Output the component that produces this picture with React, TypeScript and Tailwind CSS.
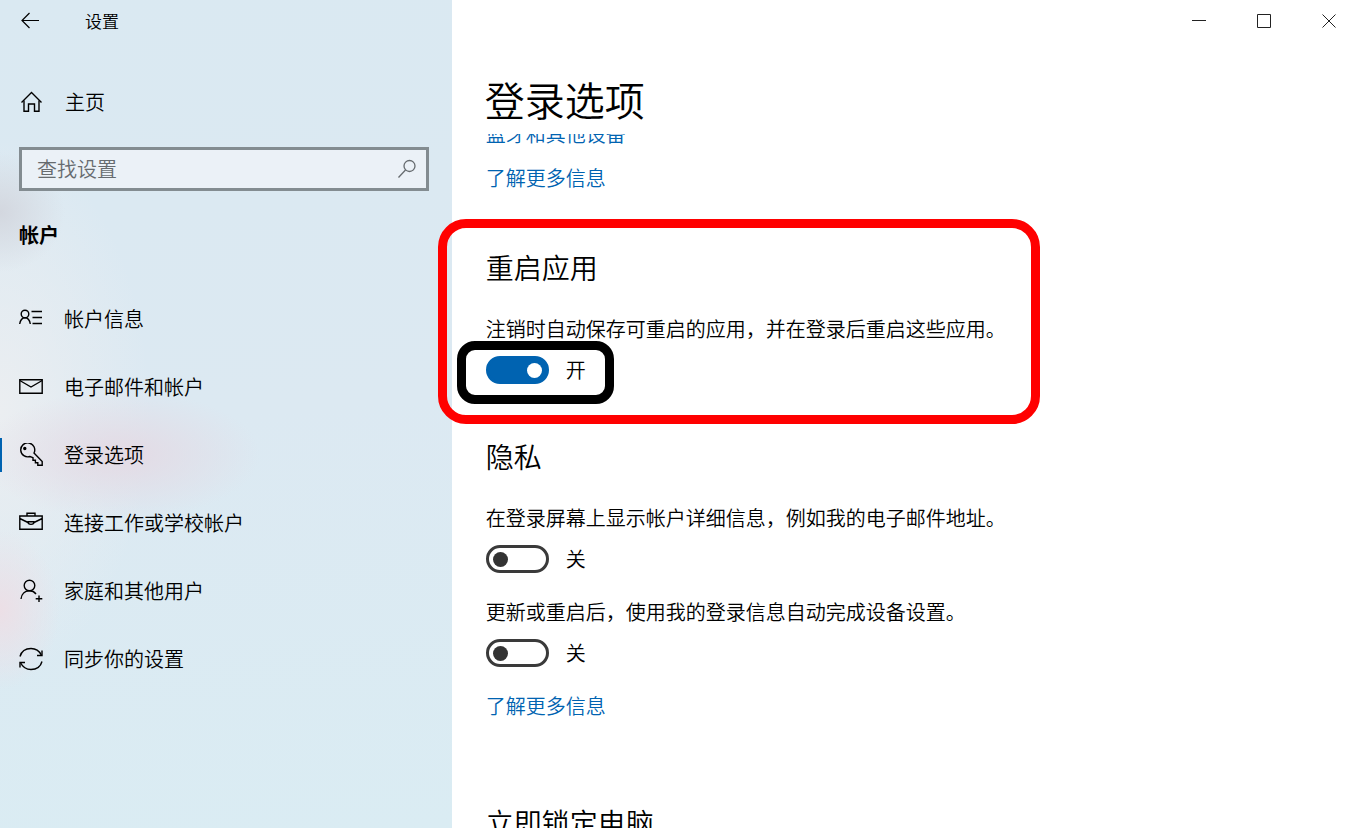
import { useState } from "react";
import type { ReactNode } from "react";

const iconProps = {
    fill: "none",
    stroke: "currentColor",
    strokeWidth: 1.4,
    "aria-hidden": true,
};

const navItems: { label: string; icon: ReactNode; active?: boolean }[] = [
    {
        label: "帐户信息",
        icon: (
            <>
                <circle cx="6" cy="7" r="3.800" />
                <path d="M.7 17c.6-3.600 2.500-6.200 5.300-6.200s4.700 2.600 5.300 6.200M12.500 4.500H23M13.500 10.500H23M13.500 16.500H23" />
            </>
        ),
    },
    {
        label: "电子邮件和帐户",
        icon: (
            <>
                <path d="M.8 4.800h22.400v13.400H.8z" />
                <path d="M.8 5.500 12 12l11.200-6.500" />
            </>
        ),
    },
    {
        label: "登录选项",
        active: true,
        icon: (
            <>
                <path d="M15 10l8.200 8.500v3.700h-4.400v-2.500h-2.400v-2.400h-2.400v-2.600l-3-1.200A7 7 0 1 1 15 10z" />
                <circle cx="5.800" cy="5.500" r="1" fill="currentColor" />
            </>
        ),
    },
    {
        label: "连接工作或学校帐户",
        icon: (
            <>
                <path d="M.8 5h22.400v13.200H.8zM8 5V2.200h8V5M.8 7.500 9 11.500M23.200 7.500 15 11.500" />
                <path d="M9 10.800h6c0 3.400-6 3.400-6 0z" />
            </>
        ),
    },
    {
        label: "家庭和其他用户",
        icon: (
            <>
                <circle cx="10.500" cy="6.500" r="5.300" />
                <path d="M2 20c.5-5 3.900-8.200 8.500-8.200 2.800 0 5 1.200 6.500 3.200M20 16.500v6.500M16.700 19.700h6.600" />
            </>
        ),
    },
    {
        label: "同步你的设置",
        icon: (
            <>
                <path d="M1 9.500C2.400 4.500 6.800 1.500 12 1.500c4.500 0 8.300 2.400 10.300 6.500M23 14.500c-1.400 5-5.800 8-11 8-4.500 0-8.300-2.400-10.300-6.500" />
                <path d="M23 3.500V8.500h-5M1 20.500v-5h5" />
            </>
        ),
    },
];

interface ToggleProps {
    id: string;
    describedBy: string;
    defaultOn?: boolean;
}

function Toggle({ id, describedBy, defaultOn = false }: ToggleProps) {
    const [on, setOn] = useState(defaultOn);

    return (
        <div className="mt-[13px] flex h-7 items-center gap-[17px]">
            <input
                id={id}
                type="checkbox"
                role="switch"
                aria-describedby={describedBy}
                checked={on}
                onChange={(e) => setOn(e.target.checked)}
                className="flex h-7 w-[63px] shrink-0 appearance-none items-center rounded-full border-[3px] border-[#3a3a3a] px-1 before:block before:size-[15px] before:rounded-full before:bg-[#333333] checked:justify-end checked:border-[#0063b1] checked:bg-[#0063b1] checked:before:bg-white"
            />
            <label htmlFor={id} className="leading-7">
                {on ? "开" : "关"}
            </label>
        </div>
    );
}

function Sidebar() {
    return (
        <aside className="w-1/3 shrink-0 bg-[#dbe9f2] bg-[radial-gradient(ellipse_140px_65px_at_120px_455px,#e4dae4_0%,#e4dae400_100%),radial-gradient(ellipse_60px_80px_at_0px_610px,#ecdfe6_0%,#ecdfe600_100%),radial-gradient(ellipse_65px_60px_at_0px_212px,#d3d7df_0%,#d3d7df00_100%),radial-gradient(ellipse_150px_270px_at_0px_410px,#ebeef1_0%,#ebeef100_100%),linear-gradient(175deg,#dae9f2_0%,#dce9f2_50%,#daecf3_100%)]">
            <div className="flex h-[42px] items-center pl-[21px]">
                <button type="button" aria-label="返回">
                    <svg width="18" height="18" viewBox="0 0 18 18" {...iconProps} strokeWidth={1.2}>
                        <path d="M18 8.500H1M8.500 1 1 8.500 8.500 16" />
                    </svg>
                </button>
                <span className="ml-[46px] text-[17px]">设置</span>
            </div>

            <a href="#home" className="mt-[46px] flex h-7 items-center gap-[23px] pl-[21px]">
                <svg width="21" height="22" viewBox="0 0 21 22" {...iconProps}>
                    <path d="M.5 11.500 10.500 1.500 20.500 11.500" />
                    <path d="M3 9.500v10.800h4.500V13h6v7.300H18V9.500" />
                </svg>
                主页
            </a>

            <div className="mt-[31px] mr-[23px] ml-[19px] flex h-11 items-center border-[3px] border-[#838c91] bg-[#ebf1f7] pr-[9px] pl-[15px] text-[#666b6f]">
                <input
                    type="search"
                    aria-label="查找设置"
                    placeholder="查找设置"
                    className="min-w-0 flex-1 bg-transparent outline-none placeholder:text-[#666b6f]"
                />
                <svg width="20" height="20" viewBox="0 0 20 20" {...iconProps} strokeWidth={1.3}>
                    <circle cx="12.500" cy="7" r="5.500" />
                    <path d="M8.500 11 1.500 18.500" />
                </svg>
            </div>

            <h2 className="mt-[30px] pl-[19px] text-xl leading-7 font-bold">帐户</h2>

            <nav className="mt-9">
                <ul>
                    {navItems.map((item) => (
                        <li key={item.label}>
                            <a
                                href="#"
                                aria-current={item.active ? "page" : undefined}
                                className="flex h-[68px] items-center"
                            >
                                <span className={item.active ? "h-[34px] w-0.5 bg-[#0063b1]" : "w-0.5"} />
                                <svg width="24" height="24" viewBox="0 0 24 24" className="ml-[17px] shrink-0" {...iconProps}>
                                    {item.icon}
                                </svg>
                                <span className="ml-[21px]">{item.label}</span>
                            </a>
                        </li>
                    ))}
                </ul>
            </nav>
        </aside>
    );
}

export default function App() {
    return (
        <div className="flex h-screen overflow-hidden bg-white font-['Noto_Sans_CJK_SC',sans-serif] text-xl leading-7 font-[350] text-black">
            <Sidebar />

            <main className="min-w-0 flex-1">
                <header className="relative z-10 bg-white pb-[15px] pl-[33px]">
                    <div className="flex h-[42px] items-center justify-end gap-[51px] pr-[19px] text-[#222222]">
                        <button type="button" aria-label="最小化">
                            <svg width="14" height="14" viewBox="0 0 14 14" {...iconProps} strokeWidth={1}>
                                <path d="M0 6.500h14" />
                            </svg>
                        </button>
                        <button type="button" aria-label="最大化">
                            <svg width="14" height="14" viewBox="0 0 14 14" {...iconProps} strokeWidth={1}>
                                <path d="M.5.5h13v13H.5z" />
                            </svg>
                        </button>
                        <button type="button" aria-label="关闭">
                            <svg width="14" height="14" viewBox="0 0 14 14" {...iconProps} strokeWidth={1}>
                                <path d="M.5.5l13 13M13.500.5l-13 13" />
                            </svg>
                        </button>
                    </div>
                    <h1 className="mt-[37px] text-[40px] leading-10">登录选项</h1>
                </header>

                <div className="-mt-3.5 pl-[34px]">
                    <div className="flex flex-col items-start gap-4 text-[#0063b1]">
                        <a href="#bluetooth">蓝牙和其他设备</a>
                        <a href="#learn-more">了解更多信息</a>
                    </div>

                    <section className="relative mt-[59px]">
                        {/* Red callout around the section */}
                        <div className="pointer-events-none absolute -top-8 -bottom-10 -left-12 w-[602px] rounded-[28px] border-[9px] border-[#ff0000]" />
                        <h2 className="text-[28px] leading-8">重启应用</h2>
                        <p id="restart-text" className="mt-8">
                            注销时自动保存可重启的应用，并在登录后重启这些应用。
                        </p>
                        <div className="relative">
                            <div className="pointer-events-none absolute -top-[15px] -bottom-5 -left-[29px] w-[157px] rounded-[18px] border-[9px] border-black" />
                            <Toggle id="restart" describedBy="restart-text" defaultOn />
                        </div>
                    </section>

                    <section className="mt-14">
                        <h2 className="text-[28px] leading-8">隐私</h2>
                        <p id="details-text" className="mt-8">
                            在登录屏幕上显示帐户详细信息，例如我的电子邮件地址。
                        </p>
                        <Toggle id="details" describedBy="details-text" />
                        <p id="update-text" className="mt-[25px]">
                            更新或重启后，使用我的登录信息自动完成设备设置。
                        </p>
                        <Toggle id="update" describedBy="update-text" />
                        <a href="#privacy" className="mt-[25px] inline-block text-[#0063b1]">
                            了解更多信息
                        </a>
                    </section>

                    <section className="mt-[86px]">
                        <h2 className="text-[28px] leading-8">立即锁定电脑</h2>
                    </section>
                </div>
            </main>
        </div>
    );
}
